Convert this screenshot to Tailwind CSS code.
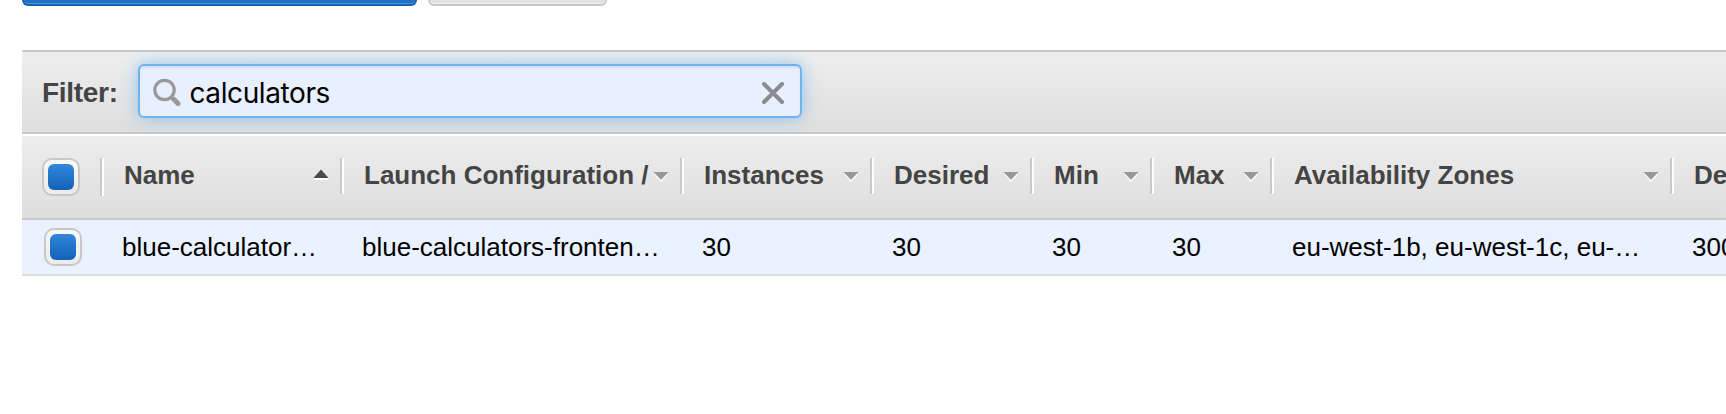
<!DOCTYPE html>
<html lang="en">
<head>
<meta charset="utf-8">
<title>Auto Scaling Groups</title>
<script src="https://cdn.jsdelivr.net/npm/@tailwindcss/browser@4"></script>
</head>
<body class="h-[414px] overflow-hidden bg-white font-['Liberation_Sans',Arial,sans-serif] text-black">
<div class="flex h-[414px] w-[1726px] flex-col overflow-hidden pl-[22px]">
  <div class="flex h-[50px] items-start gap-[11px]">
    <div class="h-[6px] w-[395px] rounded-b-[10px] border-2 border-t-0 border-[#1463b4] bg-[#1d70c4] shadow-[inset_0_-1px_0_#4c91d6]"></div>
    <div class="h-[6px] w-[179px] rounded-b-[10px] border-2 border-t-0 border-[#c8c8c8] bg-[#e2e2e2] shadow-[inset_0_-1px_0_#f0f0f0]"></div>
  </div>

  <div class="flex h-[84px] shrink-0 items-start border-y-2 border-[#c9c9c9] bg-linear-to-b from-[#eeeeee] to-[#dedede]">
    <label class="w-[116px] pt-[25px] pl-[20px] text-[28px] leading-[32px] font-bold tracking-[-0.3px] text-[#444]">Filter:</label>
    <div class="mt-[12px] flex h-[54px] w-[664px] items-center rounded-[6px] border-2 border-[#6bb5f5] bg-[#e8effd] pl-[13px] shadow-[0_0_16px_rgba(82,168,236,0.6),inset_0_2px_2px_rgba(0,0,0,0.075)]">
      <svg class="mt-[2px] h-[28px] w-[28px] shrink-0" viewBox="0 0 28 28" fill="none" stroke="#999">
        <circle cx="11.5" cy="12" r="9.7" stroke-width="3.2"/>
        <path d="M18.5 19L21 21.5" stroke-width="3.6"/>
        <path d="M20.8 21.3L25 25.5" stroke-width="5" stroke-linecap="round"/>
      </svg>
      <span class="mt-[3px] ml-[8.5px] flex-1 font-[Inter,sans-serif] text-[28px] leading-[34px] tracking-[-0.4px]">calculators</span>
      <svg class="mt-[4px] mr-[16px] h-[22px] w-[22px]" viewBox="0 0 22 22" fill="none" stroke="#8a8c90" stroke-width="4" stroke-linecap="round"><path d="M2 2L20 20M20 2L2 20"/></svg>
    </div>
  </div>

  <div class="mt-[2px] flex h-[84px] shrink-0 items-start border-b-2 border-[#c9c9c9] bg-linear-to-b from-[#ededed] to-[#dedede] text-[26px] leading-[30px] font-bold whitespace-nowrap text-[#444]">
    <div class="flex w-[78px] shrink-0 pt-[22px] pl-[20px]">
      <div class="flex h-[38px] w-[38px] items-center justify-center rounded-[10px] border-2 border-[#c8c8c8] bg-linear-to-b from-[#f8f8f8] to-[#ebebeb]"><div class="h-[26px] w-[26px] rounded-[6px] bg-linear-to-b from-[#3087dc] to-[#1263b8]"></div></div>
    </div>
    <div class="flex w-[240px] shrink-0 pt-[22px]">
      <i class="h-[38px] w-[4px] border-l-2 border-[#c9c9c9] bg-white"></i>
      <span class="ml-[20px] flex-1 pt-[2px]">Name</span>
      <svg class="mt-[10px] mr-[11px] h-[14px] w-[16px]" viewBox="0 0 16 14"><path d="M1 10H15V12H1Z" fill="#fff"/><path d="M0.5 10L8 1.5L15.5 10Z" fill="#4a4a4a"/></svg>
    </div>
    <div class="flex w-[340px] shrink-0 pt-[22px]">
      <i class="h-[36px] w-[4px] border-l-2 border-[#c9c9c9] bg-white"></i>
      <span class="ml-[20px] flex-1 pt-[2px]">Launch Configuration /</span>
      <svg class="mt-[12px] mr-[11px] h-[14px] w-[16px]" viewBox="0 0 16 14"><path d="M1 4L8 12L15 4Z" fill="#fff"/><path d="M0.5 2L8 10L15.5 2Z" fill="#999"/></svg>
    </div>
    <div class="flex w-[190px] shrink-0 pt-[22px]">
      <i class="h-[36px] w-[4px] border-l-2 border-[#c9c9c9] bg-white"></i>
      <span class="ml-[20px] flex-1 pt-[2px]">Instances</span>
      <svg class="mt-[12px] mr-[11px] h-[14px] w-[16px]" viewBox="0 0 16 14"><path d="M1 4L8 12L15 4Z" fill="#fff"/><path d="M0.5 2L8 10L15.5 2Z" fill="#999"/></svg>
    </div>
    <div class="flex w-[160px] shrink-0 pt-[22px]">
      <i class="h-[36px] w-[4px] border-l-2 border-[#c9c9c9] bg-white"></i>
      <span class="ml-[20px] flex-1 pt-[2px]">Desired</span>
      <svg class="mt-[12px] mr-[11px] h-[14px] w-[16px]" viewBox="0 0 16 14"><path d="M1 4L8 12L15 4Z" fill="#fff"/><path d="M0.5 2L8 10L15.5 2Z" fill="#999"/></svg>
    </div>
    <div class="flex w-[120px] shrink-0 pt-[22px]">
      <i class="h-[36px] w-[4px] border-l-2 border-[#c9c9c9] bg-white"></i>
      <span class="ml-[20px] flex-1 pt-[2px]">Min</span>
      <svg class="mt-[12px] mr-[11px] h-[14px] w-[16px]" viewBox="0 0 16 14"><path d="M1 4L8 12L15 4Z" fill="#fff"/><path d="M0.5 2L8 10L15.5 2Z" fill="#999"/></svg>
    </div>
    <div class="flex w-[120px] shrink-0 pt-[22px]">
      <i class="h-[36px] w-[4px] border-l-2 border-[#c9c9c9] bg-white"></i>
      <span class="ml-[20px] flex-1 pt-[2px]">Max</span>
      <svg class="mt-[12px] mr-[11px] h-[14px] w-[16px]" viewBox="0 0 16 14"><path d="M1 4L8 12L15 4Z" fill="#fff"/><path d="M0.5 2L8 10L15.5 2Z" fill="#999"/></svg>
    </div>
    <div class="flex w-[400px] shrink-0 pt-[22px]">
      <i class="h-[36px] w-[4px] border-l-2 border-[#c9c9c9] bg-white"></i>
      <span class="ml-[20px] flex-1 pt-[2px]">Availability Zones</span>
      <svg class="mt-[12px] mr-[11px] h-[14px] w-[16px]" viewBox="0 0 16 14"><path d="M1 4L8 12L15 4Z" fill="#fff"/><path d="M0.5 2L8 10L15.5 2Z" fill="#999"/></svg>
    </div>
    <div class="flex w-[56px] shrink-0 overflow-hidden pt-[22px]">
      <i class="h-[36px] w-[4px] shrink-0 border-l-2 border-[#c9c9c9] bg-white"></i>
      <span class="ml-[20px] pt-[2px]">De</span>
    </div>
  </div>

  <div class="flex h-[56px] shrink-0 items-start border-b-2 border-[#dcdcdc] bg-[#eaf1ff] text-[26px] leading-[30px] whitespace-nowrap">
    <div class="flex w-[100px] shrink-0 pt-[8px] pl-[22px]">
      <div class="flex h-[38px] w-[38px] items-center justify-center rounded-[10px] border-2 border-[#c8c8c8] bg-linear-to-b from-[#f8f8f8] to-[#ebebeb]"><div class="h-[26px] w-[26px] rounded-[6px] bg-linear-to-b from-[#3087dc] to-[#1263b8]"></div></div>
    </div>
    <div class="w-[240px] shrink-0 pt-[12px]">blue-calculator…</div>
    <div class="w-[340px] shrink-0 pt-[12px]">blue-calculators-fronten…</div>
    <div class="w-[190px] shrink-0 pt-[12px]">30</div>
    <div class="w-[160px] shrink-0 pt-[12px]">30</div>
    <div class="w-[120px] shrink-0 pt-[12px]">30</div>
    <div class="w-[120px] shrink-0 pt-[12px]">30</div>
    <div class="w-[400px] shrink-0 pt-[12px]">eu-west-1b, eu-west-1c, eu-…</div>
    <div class="w-[34px] shrink-0 overflow-hidden pt-[12px]">300</div>
  </div>
</div>
</body>
</html>
